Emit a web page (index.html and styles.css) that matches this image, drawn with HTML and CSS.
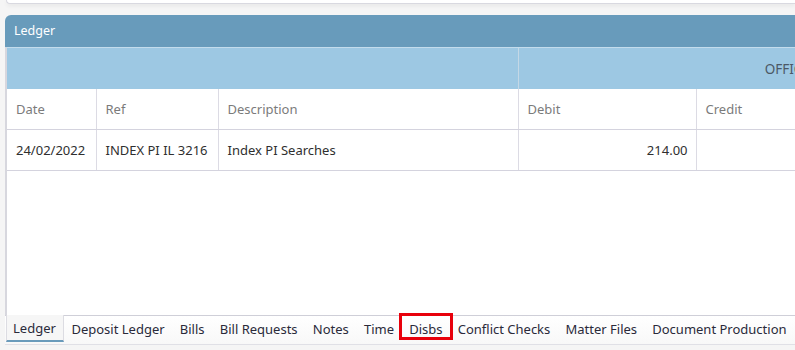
FILE: index.html
```html
<!DOCTYPE html>
<html lang="en">
<head>
  <meta charset="UTF-8">
  <title>Ledger</title>
  <link rel="stylesheet" href="styles.css">
</head>
<body>

<div class="top-card"></div>

<div class="panel">
  <div class="panel-title">Ledger</div>
  <div class="panel-body">
    <table class="ledger">
      <colgroup>
        <col class="c-date">
        <col class="c-ref">
        <col class="c-desc">
        <col class="c-debit">
        <col class="c-amt">
        <col class="c-amt">
      </colgroup>
      <tr class="band">
        <th colspan="3"></th>
        <th colspan="3" class="group">OFFICE</th>
      </tr>
      <tr class="heads">
        <th>Date</th>
        <th>Ref</th>
        <th>Description</th>
        <th>Debit</th>
        <th>Credit</th>
        <th>Balance</th>
      </tr>
      <tr class="row">
        <td>24/02/2022</td>
        <td>INDEX PI IL 3216</td>
        <td>Index PI Searches</td>
        <td class="num">214.00</td>
        <td></td>
        <td></td>
      </tr>
    </table>
  </div>
  <div class="tabs">
    <span class="tab active">Ledger</span>
    <span class="tab">Deposit Ledger</span>
    <span class="tab">Bills</span>
    <span class="tab">Bill Requests</span>
    <span class="tab">Notes</span>
    <span class="tab">Time</span>
    <span class="tab marked">Disbs</span>
    <span class="tab">Conflict Checks</span>
    <span class="tab">Matter Files</span>
    <span class="tab">Document Production</span>
  </div>
</div>

</body>
</html>
```

FILE: styles.css
```css
body {
  margin: 0;
  background: #f5f5f5;
  font-family: "Noto Sans", "Open Sans", sans-serif;
  overflow: hidden;
}

.top-card {
  height: 3px;
  margin-left: 6px;
  background: #fff;
  border: 1px solid #d9d9e0;
  border-top: none;
  border-right: none;
  border-radius: 0 0 0 6px;
  box-shadow: 0 2px 4px rgba(0,0,0,0.06);
}

.panel {
  margin: 11px 0 0 5px;
  width: 900px;
}

.panel-title {
  height: 32px;
  line-height: 32px;
  padding-left: 9px;
  background: #689bbb;
  color: #fff;
  font-size: 12.5px;
  border-radius: 6px 0 0 0;
}

.panel-body {
  height: 267px;
  background: #fff;
  border-left: 2px solid #d7d7de;
  border-top: 1px solid #c3dcec;
  overflow: hidden;
}

.ledger {
  border-collapse: collapse;
  table-layout: fixed;
  width: 1049px;
  font-size: 13px;
}

.c-date { width: 89px; }
.c-ref { width: 122px; }
.c-desc { width: 300px; }
.c-debit { width: 178px; }
.c-amt { width: 180px; }

.band th {
  height: 41px;
  background: #9dc8e3;
  padding: 0;
  font-weight: normal;
  font-size: 13.5px;
  color: #4c5866;
  text-align: center;
}

.band .group {
  border-left: 1px solid #c4d8e6;
}

.heads th {
  height: 40px;
  padding: 0 9px;
  font-weight: normal;
  color: #7b7b7b;
  text-align: left;
  border-left: 1px solid #dcdbe4;
  border-bottom: 1px solid #d4d3de;
}

.row td {
  height: 40px;
  padding: 0 9px;
  color: #2f2f2f;
  border-left: 1px solid #dcdbe4;
  border-bottom: 1px solid #d4d3de;
}

.heads th:first-child,
.row td:first-child {
  border-left: none;
}

.row .num {
  text-align: right;
  padding-right: 8px;
}

.tabs {
  display: flex;
  height: 28px;
  padding-left: 1px;
  border-top: 1px solid #cfcfd8;
  border-bottom: 1px solid #e0e0e6;
  background: linear-gradient(#fff, #f8f8f8);
  font-size: 13px;
  color: #2a2a3a;
}

.tab {
  padding: 0 7.6px;
  line-height: 26px;
  white-space: nowrap;
}

.tab.active {
  background: #f6f6f6;
  border: 1px solid #dcdce2;
  border-top: none;
  border-bottom: 2px solid #6a9bbb;
  margin-top: -1px;
  line-height: 27px;
  height: 25px;
  padding: 0 7px 0 6px;
}

.tab.marked {
  height: 21px;
  outline: 3px solid #e8000b;
  outline-offset: 0;
}
```
